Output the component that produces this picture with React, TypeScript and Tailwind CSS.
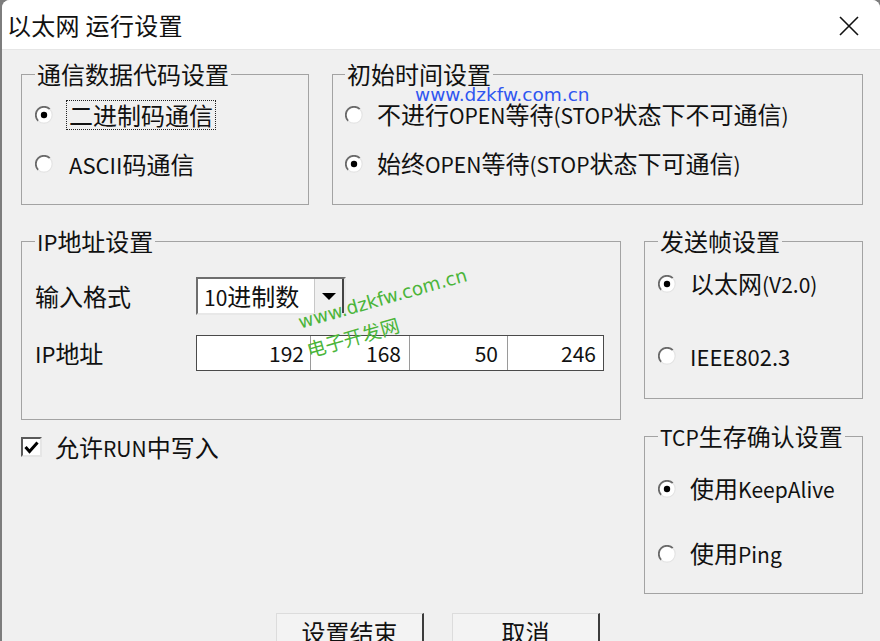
import React from "react";

function T({ s, lat = "text-[21px]" }: { s: string; lat?: string }) {
  const parts = s.split(/([\x20-\x7E]+)/);
  return (
    <>
      {parts.map((p, i) =>
        p ? (
          /^[\x20-\x7E]+$/.test(p) ? (
            <span key={i} className={lat}>
              {p}
            </span>
          ) : (
            <span key={i}>{p}</span>
          )
        ) : null
      )}
    </>
  );
}

function Radio({ checked }: { checked?: boolean }) {
  return (
    <svg width="18" height="18" viewBox="0 0 18 18" className="shrink-0">
      <circle cx="9" cy="9" r="8" fill="#ffffff" />
      <path d="M 3.2 14.8 A 8.2 8.2 0 0 1 14.8 3.2" stroke="#6a6a6a" strokeWidth="1.8" fill="none" />
      <path d="M 14.8 3.2 A 8.2 8.2 0 0 1 3.2 14.8" stroke="#e4e4e4" strokeWidth="1.2" fill="none" />
      {checked && <circle cx="9" cy="9" r="3.2" fill="#000000" />}
    </svg>
  );
}

function RadioRow({
  checked,
  label,
  lat,
  gap = "ml-[16px]",
  focus,
  className = "",
}: {
  checked?: boolean;
  label: string;
  lat?: string;
  gap?: string;
  focus?: boolean;
  className?: string;
}) {
  return (
    <div className={"flex items-center h-[49px] " + className}>
      <Radio checked={checked} />
      {focus ? (
        <span className="ml-[13px] px-[2px] border border-dotted border-[#222] leading-[28px]">
          <T s={label} lat={lat} />
        </span>
      ) : (
        <span className={gap + " leading-[28px]"}>
          <T s={label} lat={lat} />
        </span>
      )}
    </div>
  );
}

function Legend({ children }: { children: React.ReactNode }) {
  return <legend className="px-[2px] leading-[26px] text-[24px]">{children}</legend>;
}

export default function App() {
  return (
    <div className="w-[880px] h-[641px] bg-[#7d7d7d] overflow-hidden font-['Noto_Sans_CJK_SC',sans-serif] text-[24px] text-[#111]">
      <div className="relative ml-[2px] h-full bg-[#f0f0f0] rounded-t-[8px] overflow-hidden">
        {/* Title bar */}
        <div className="h-[50px] bg-white border-b border-[#e6e6e6] flex items-center pl-[5px] pr-[20px]">
          <span className="text-[24px] leading-none tracking-[0.3px]">以太网 运行设置</span>
          <svg className="ml-auto mt-[2px]" width="22" height="22" viewBox="0 0 22 22">
            <path d="M2 2 L20 20 M20 2 L2 20" stroke="#111" strokeWidth="1.6" />
          </svg>
        </div>

        {/* Body */}
        <div className="pl-[19px] pt-[11px]">
          {/* Row 1 */}
          <div className="flex gap-[23px]">
            <fieldset className="w-[288px] h-[144px] border border-[#a3a3a3] pl-[13px]">
              <Legend>通信数据代码设置</Legend>
              <div className="pt-[3px]">
                <RadioRow checked focus label="二进制码通信" />
                <RadioRow label="ASCII码通信" lat="text-[22px]" />
              </div>
            </fieldset>
            <fieldset className="w-[531px] h-[144px] border border-[#a3a3a3] pl-[12px]">
              <Legend>初始时间设置</Legend>
              <div className="pt-[3px]">
                <RadioRow gap="ml-[14px]" label="不进行OPEN等待(STOP状态下不可通信)" />
                <RadioRow gap="ml-[14px]" checked label="始终OPEN等待(STOP状态下可通信)" />
              </div>
            </fieldset>
          </div>

          {/* Row 2 */}
          <div className="flex gap-[23px] mt-[23px]">
            <div className="w-[600px]">
              <fieldset className="h-[192px] border border-[#a3a3a3] pl-[13px]">
                <Legend>
                  <T s="IP地址设置" lat="text-[22px]" />
                </Legend>
                <div className="flex items-center mt-[23px] h-[38px]">
                  <span className="w-[161px] leading-none">输入格式</span>
                  <div className="w-[150px] h-[38px] flex bg-white border-2 border-t-[#6e6e6e] border-l-[#6e6e6e] border-b-[#e8e8e8] border-r-[#e8e8e8]">
                    <span className="pl-[6px] leading-[34px]">
                      <T s="10进制数" />
                    </span>
                    <div className="ml-auto w-[30px] h-full bg-[#f0f0f0] border-l border-[#c8c8c8] border-r-2 border-r-[#444] flex items-center justify-center">
                      <svg width="16" height="9" viewBox="0 0 16 9">
                        <path d="M1 1 L15 1 L8 8 Z" fill="#000" />
                      </svg>
                    </div>
                  </div>
                </div>
                <div className="flex items-center mt-[20px] h-[36px]">
                  <span className="w-[161px] leading-none">
                    <T s="IP地址" lat="text-[22px]" />
                  </span>
                  <div className="w-[408px] h-[36px] flex bg-white border border-[#4a4a4a] text-[21px]">
                    <span className="w-[113px] text-right pr-[6px] leading-[34px]">192</span>
                    <span className="w-[99px] border-l border-[#9a9a9a] text-right pr-[8px] leading-[34px]">168</span>
                    <span className="w-[98px] border-l border-[#9a9a9a] text-right pr-[9px] leading-[34px]">50</span>
                    <span className="flex-1 border-l border-[#9a9a9a] text-right pr-[7px] leading-[34px]">246</span>
                  </div>
                </div>
              </fieldset>
              <div className="flex items-center mt-[17px] h-[20px]">
                <div className="w-[21px] h-[20px] bg-white border-2 border-t-[#5a5a5a] border-l-[#5a5a5a] border-b-[#e6e6e6] border-r-[#e6e6e6] flex items-center justify-center">
                  <svg width="15" height="13" viewBox="0 0 15 13">
                    <path d="M1.5 6 L5.5 10.5 L13.5 1.5" stroke="#000" strokeWidth="3" fill="none" />
                  </svg>
                </div>
                <span className="ml-[13px] leading-none">
                  <T s="允许RUN中写入" />
                </span>
              </div>
            </div>

            <div className="w-[219px] flex flex-col gap-[24px]">
              <fieldset className="h-[171px] border border-[#a3a3a3] pl-[13px]">
                <Legend>发送帧设置</Legend>
                <RadioRow className="mt-[5px]" gap="ml-[14px]" checked label="以太网(V2.0)" />
                <RadioRow className="mt-[23px]" gap="ml-[14px]" label="IEEE802.3" lat="text-[22px]" />
              </fieldset>
              <fieldset className="h-[171px] border border-[#a3a3a3] pl-[13px]">
                <Legend>
                  <T s="TCP生存确认设置" />
                </Legend>
                <RadioRow className="mt-[14px]" gap="ml-[14px]" checked label="使用KeepAlive" />
                <RadioRow className="mt-[16px]" gap="ml-[14px]" label="使用Ping" />
              </fieldset>
            </div>
          </div>

          {/* Buttons */}
          <div className="flex justify-center gap-[28px] mt-[19px] pr-[25px]">
            <div className="w-[148px] h-[40px] bg-[#f3f3f3] border-t border-l border-[#dcdcdc] border-r-2 border-r-[#3c3c3c] flex justify-center pt-[3px] leading-[30px]">
              设置结束
            </div>
            <div className="w-[148px] h-[40px] bg-[#f3f3f3] border-t border-l border-[#dcdcdc] border-r-2 border-r-[#3c3c3c] flex justify-center pt-[3px] leading-[30px]">
              取消
            </div>
          </div>
        </div>

        {/* Watermarks */}
        <div className="absolute left-[413px] top-[86px] font-['DejaVu_Sans',sans-serif] text-[18.5px] leading-none text-[#2f56f0]">
          www.dzkfw.com.cn
        </div>
        <div className="absolute left-[297px] top-[314px] origin-left rotate-[-16deg] font-['DejaVu_Sans',sans-serif] text-[18.5px] leading-none text-[#4bb53a]">
          www.dzkfw.com.cn
        </div>
        <div className="absolute left-[305px] top-[340px] origin-left rotate-[-16deg] text-[19px] leading-none text-[#4bb53a]">
          电子开发网
        </div>
      </div>
    </div>
  );
}
